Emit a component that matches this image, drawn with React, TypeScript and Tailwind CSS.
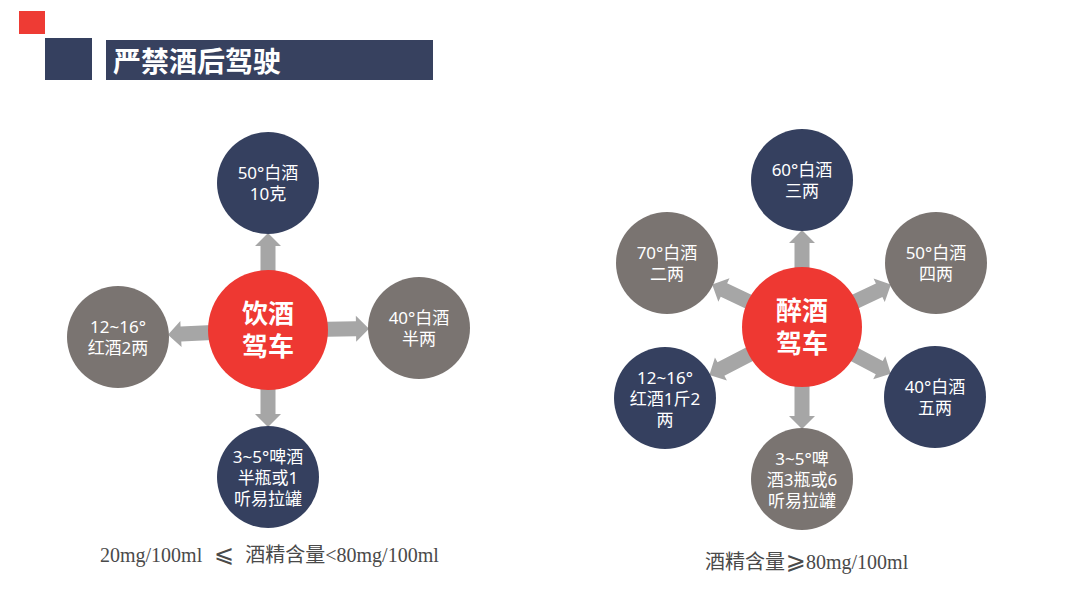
import React from 'react';

type Node = { x: number; y: number };

// arrows run from behind the red hub out to the edge of each satellite
function Arrows({ hub, nodes, w, h }: { hub: Node; nodes: Node[]; w: number; h: number }) {
  return (
    <svg className="absolute inset-0" width={w} height={h} viewBox={`0 0 ${w} ${h}`}>
      {nodes.map((n, i) => {
        const dx = n.x - hub.x;
        const dy = n.y - hub.y;
        const dist = Math.hypot(dx, dy);
        const angle = (Math.atan2(dy, dx) * 180) / Math.PI;
        const tip = dist - 50;
        const neck = tip - 13;
        const pts = `45,-7.5 ${neck},-7.5 ${neck},-13 ${tip},0 ${neck},13 ${neck},7.5 45,7.5`;
        return (
          <polygon
            key={i}
            points={pts}
            fill="#a6a6a6"
            transform={`translate(${hub.x} ${hub.y}) rotate(${angle})`}
          />
        );
      })}
    </svg>
  );
}

function Bubble({ className, lines }: { className: string; lines: string[] }) {
  return (
    <div
      className={`absolute w-[102px] h-[102px] rounded-full flex flex-col items-center justify-center text-white text-[17px] leading-[21px] text-center ${className}`}
    >
      {lines.map((l) => (
        <span key={l}>{l}</span>
      ))}
    </div>
  );
}

function Hub({ className, lines }: { className: string; lines: string[] }) {
  return (
    <div
      className={`absolute w-[120px] h-[120px] rounded-full bg-[#ee3832] flex flex-col items-center justify-center text-white font-bold text-[26px] leading-[33px] ${className}`}
    >
      {lines.map((l) => (
        <span key={l}>{l}</span>
      ))}
    </div>
  );
}

export default function App() {
  return (
    <div className="w-[1080px] h-[608px] bg-white overflow-hidden flex flex-col font-['Noto_Sans','Noto_Sans_CJK_SC',sans-serif]">
      {/* header */}
      <div className="pt-[11px] pl-[19px]">
        <div className="w-[26px] h-[23px] bg-[#ee3b34]" />
        <div className="mt-[4px] ml-[26px] flex items-end">
          <div className="w-[47px] h-[42px] bg-[#35405f]" />
          <div className="ml-[14px] w-[327px] h-[40px] bg-[#37415f] flex items-center pl-[7px]">
            <span className="text-white font-bold text-[28px] leading-none font-['Noto_Sans_CJK_SC',sans-serif]">
              严禁酒后驾驶
            </span>
          </div>
        </div>
      </div>

      <div className="mt-[45px] flex">
        {/* 饮酒驾车 */}
        <div className="ml-[60px] w-[420px] flex flex-col">
          <div className="relative w-[420px] h-[416px]">
            <Arrows
              hub={{ x: 208, y: 205 }}
              nodes={[
                { x: 208, y: 58 },
                { x: 208, y: 352 },
                { x: 58, y: 212 },
                { x: 359, y: 203 },
              ]}
              w={420}
              h={416}
            />
            <Bubble className="left-[157px] top-[7px] bg-[#35405f]" lines={['50°白酒', '10克']} />
            <Bubble className="left-[7px] top-[161px] bg-[#7a7471]" lines={['12~16°', '红酒2两']} />
            <Bubble className="left-[308px] top-[152px] bg-[#7a7471]" lines={['40°白酒', '半两']} />
            <Bubble className="left-[157px] top-[301px] bg-[#35405f]" lines={['3~5°啤酒', '半瓶或1', '听易拉罐']} />
            <Hub className="left-[148px] top-[145px]" lines={['饮酒', '驾车']} />
          </div>
          <p className="pl-[40px] text-[20px] leading-[28px] text-[#4a4a4a] whitespace-nowrap font-['Liberation_Serif','Noto_Sans_CJK_SC',serif]">
            20mg/100ml
            <span className="inline-block w-[43px] text-center font-['DejaVu_Sans',sans-serif] text-[24px] leading-[20px]">⩽</span>
            酒精含量&lt;80mg/100ml
          </p>
        </div>

        {/* 醉酒驾车 */}
        <div className="ml-[120px] w-[400px] flex flex-col">
          <div className="relative w-[400px] h-[416px]">
            <Arrows
              hub={{ x: 202, y: 202 }}
              nodes={[
                { x: 202, y: 55 },
                { x: 67, y: 138 },
                { x: 336, y: 138 },
                { x: 65, y: 273 },
                { x: 335, y: 272 },
                { x: 202, y: 354 },
              ]}
              w={400}
              h={416}
            />
            <Bubble className="left-[151px] top-[4px] bg-[#35405f]" lines={['60°白酒', '三两']} />
            <Bubble className="left-[16px] top-[87px] bg-[#7a7471]" lines={['70°白酒', '二两']} />
            <Bubble className="left-[285px] top-[87px] bg-[#7a7471]" lines={['50°白酒', '四两']} />
            <Bubble className="left-[14px] top-[222px] bg-[#35405f]" lines={['12~16°', '红酒1斤2', '两']} />
            <Bubble className="left-[284px] top-[221px] bg-[#35405f]" lines={['40°白酒', '五两']} />
            <Bubble className="left-[151px] top-[303px] bg-[#7a7471]" lines={['3~5°啤', '酒3瓶或6', '听易拉罐']} />
            <Hub className="left-[142px] top-[142px]" lines={['醉酒', '驾车']} />
          </div>
          <p className="mt-[7px] pl-[105px] text-[20px] leading-[28px] text-[#4a4a4a] whitespace-nowrap font-['Liberation_Serif','Noto_Sans_CJK_SC',serif]">
            酒精含量
            <span className="inline-block w-[21px] text-center font-['DejaVu_Sans',sans-serif] text-[24px] leading-[20px]">⩾</span>
            80mg/100ml
          </p>
        </div>
      </div>
    </div>
  );
}
